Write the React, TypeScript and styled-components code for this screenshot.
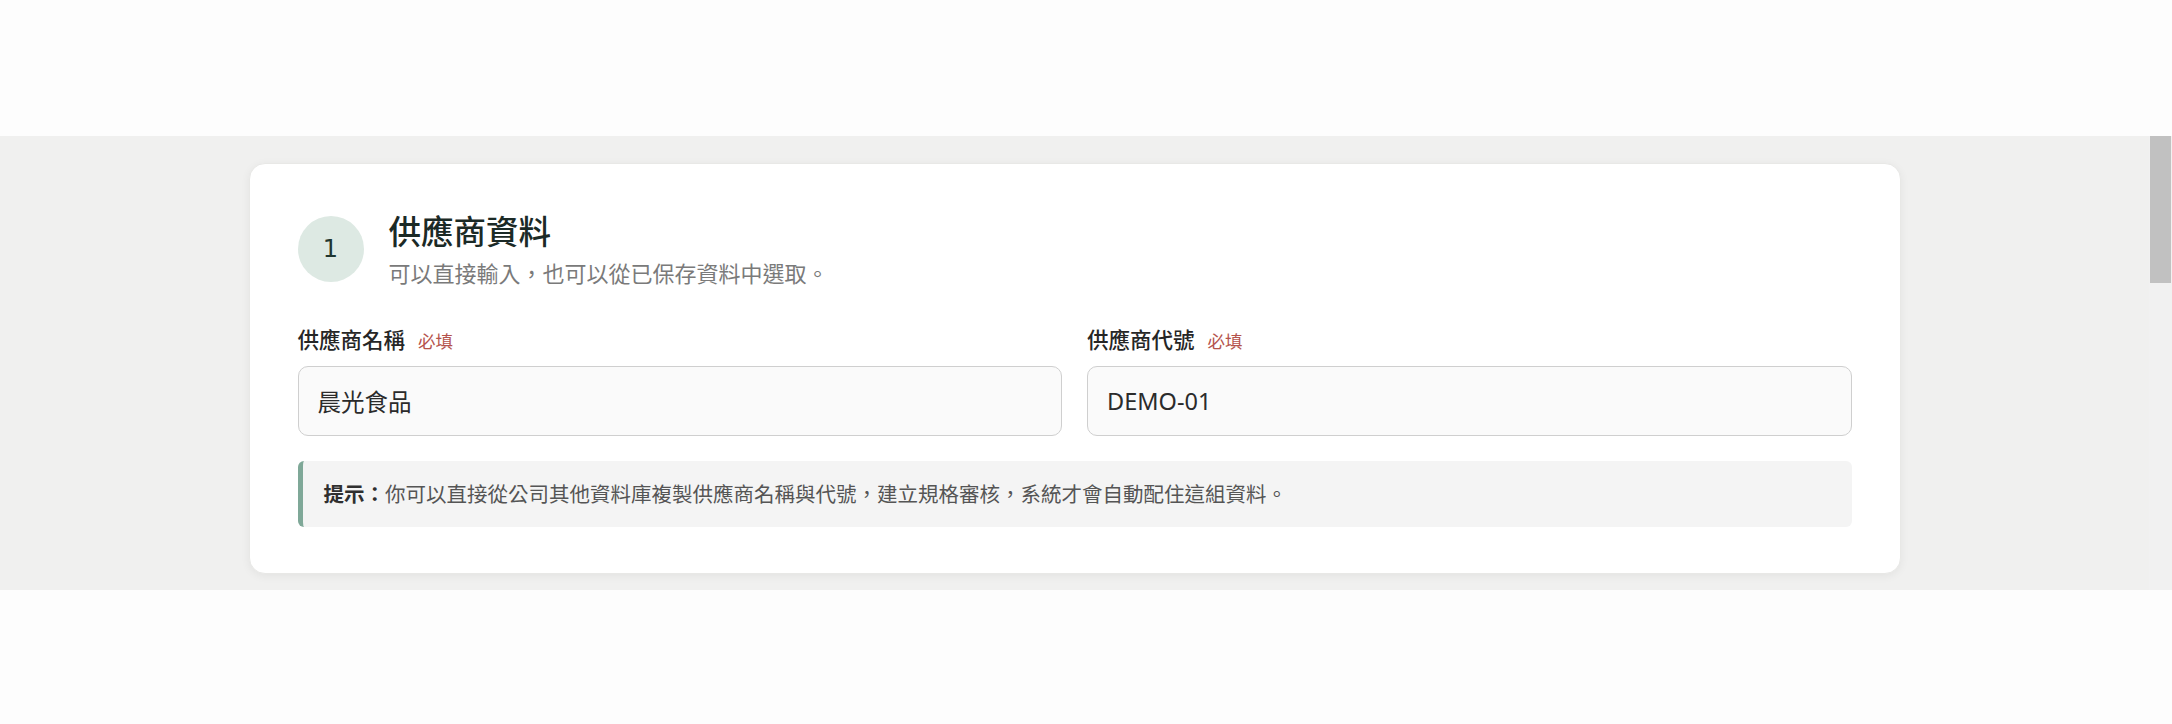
import styled, { createGlobalStyle } from 'styled-components'

const GlobalStyle = createGlobalStyle`
  html, body {
    margin: 0;
    padding: 0;
    background: #fdfdfd;
  }
  body {
    font-family: "Noto Sans", "Noto Sans CJK TC", sans-serif;
    color: #2a2a2a;
  }
  * {
    box-sizing: border-box;
  }
`

const Page = styled.div`
  display: flex;
  flex-direction: column;
  height: 724px;
  background: #fdfdfd;
`

const TopSpace = styled.div`
  height: 136px;
  flex-shrink: 0;
`

const ScrollArea = styled.div`
  height: 454px;
  flex-shrink: 0;
  display: flex;
  background: #f0f0ef;
`

const Viewport = styled.div`
  flex: 1;
  min-width: 0;
  overflow: hidden;
`

// drawn scrollbar, the headless browser hides its own
const ScrollTrack = styled.div`
  width: 23px;
  flex-shrink: 0;
  background: #f1f1f1;
  display: flex;
  flex-direction: column;
  padding: 0 1px 0 1px;
`

const ScrollThumb = styled.div<{ size: number }>`
  height: ${(p) => p.size}px;
  background: #c1c1c1;
`

const Content = styled.div`
  min-height: 1400px;
  padding: 27px 0;
`

const Card = styled.section`
  max-width: 1652px;
  margin: 0 auto;
  background: #ffffff;
  border-radius: 16px;
  border: 1px solid #e8e8e6;
  box-shadow: 0 2px 10px rgba(0, 0, 0, 0.06);
  padding: 47px 48px 46px;
`

const Header = styled.div`
  display: flex;
  align-items: center;
  gap: 25px;
`

const StepBadge = styled.div`
  width: 66px;
  height: 66px;
  border-radius: 50%;
  background: #dde9e3;
  color: #1f3630;
  display: flex;
  align-items: center;
  justify-content: center;
  font-family: "DejaVu Sans", sans-serif;
  font-size: 24px;
  flex-shrink: 0;
  margin-top: -4px;
`

const HeaderText = styled.div`
  display: flex;
  flex-direction: column;
  gap: 4px;
`

const Title = styled.h2`
  margin: 0;
  font-size: 32.5px;
  line-height: 42px;
  font-weight: 500;
  color: #1b2a26;
`

const Subtitle = styled.p`
  margin: 0;
  font-size: 22px;
  line-height: 33px;
  color: #7a7a7a;
`

const FieldGrid = styled.div`
  display: grid;
  grid-template-columns: 1fr 1fr;
  gap: 25px;
  margin-top: 35px;
`

const Field = styled.label`
  display: flex;
  flex-direction: column;
  gap: 10px;
`

const LabelRow = styled.div`
  display: flex;
  align-items: baseline;
  gap: 13px;
  line-height: 30px;
`

const LabelText = styled.span`
  font-size: 21.5px;
  font-weight: 500;
  color: #262626;
`

const Required = styled.span`
  font-size: 17.5px;
  color: #b5534c;
`

const TextInput = styled.input`
  height: 70px;
  width: 100%;
  border: 1.5px solid #cfcfcf;
  border-radius: 10px;
  background: #fafafa;
  padding: 0 19px;
  font-family: "Noto Sans", "Noto Sans CJK TC", sans-serif;
  font-size: 23.5px;
  color: #2b2b2b;
  outline: none;
`

const Hint = styled.div`
  margin-top: 25px;
  background: #f4f4f4;
  border-left: 5px solid #7fa898;
  border-radius: 6px;
  padding: 18px 21px;
  font-size: 20.5px;
  line-height: 30px;
  color: #555555;
`

const HintLead = styled.strong`
  font-weight: 700;
  color: #2f2f2f;
`

const fields = [
  { label: '供應商名稱', value: '晨光食品' },
  { label: '供應商代號', value: 'DEMO-01' },
]

const App = () => {
  return (
    <>
      <GlobalStyle />
      <Page>
        <TopSpace />
        <ScrollArea>
          <Viewport>
            <Content>
              <Card>
                <Header>
                  <StepBadge>1</StepBadge>
                  <HeaderText>
                    <Title>供應商資料</Title>
                    <Subtitle>可以直接輸入，也可以從已保存資料中選取。</Subtitle>
                  </HeaderText>
                </Header>
                <FieldGrid>
                  {fields.map((f) => (
                    <Field key={f.label}>
                      <LabelRow>
                        <LabelText>{f.label}</LabelText>
                        <Required>必填</Required>
                      </LabelRow>
                      <TextInput defaultValue={f.value} />
                    </Field>
                  ))}
                </FieldGrid>
                <Hint>
                  <HintLead>提示：</HintLead>
                  你可以直接從公司其他資料庫複製供應商名稱與代號，建立規格審核，系統才會自動配住這組資料。
                </Hint>
              </Card>
            </Content>
          </Viewport>
          <ScrollTrack>
            <ScrollThumb size={147} />
          </ScrollTrack>
        </ScrollArea>
      </Page>
    </>
  )
}

export default App
